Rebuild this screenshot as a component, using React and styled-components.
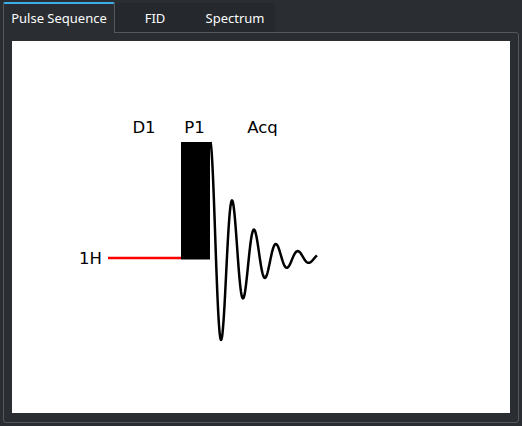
import React from "react";
import styled, { createGlobalStyle } from "styled-components";

const Global = createGlobalStyle`
  html, body { margin: 0; padding: 0; background: #2a2e32; }
  #root { height: 100vh; }
`;

const Window = styled.div`
  box-sizing: border-box;
  height: 100vh;
  padding: 2px 3px 3px 3px;
  display: flex;
  flex-direction: column;
  background: #2a2e32;
  font-family: "Noto Sans", sans-serif;
`;

const TabBar = styled.div`
  display: flex;
  align-items: flex-end;
  height: 30px;
  flex: none;
`;

const Tab = styled.div`
  box-sizing: border-box;
  display: flex;
  align-items: center;
  justify-content: center;
  font-size: 13px;
  color: #fcfcfc;
  white-space: nowrap;
  ${(p) =>
    p.$active
      ? `
    position: relative;
    z-index: 1;
    width: 112px;
    height: 31px;
    margin-bottom: -1px;
    padding-bottom: 1px;
    background: #2a2e32;
    border-top: 2px solid #3daee9;
    border-left: 1px solid #55595d;
    border-right: 1px solid #55595d;
    border-radius: 2px 2px 0 0;
  `
      : `
    width: 80px;
    height: 29px;
    background: #25282c;
  `}
`;

const Panel = styled.div`
  box-sizing: border-box;
  flex: 1;
  display: flex;
  padding: 8px 8px 9px 8px;
  border: 1px solid #55595d;
  border-radius: 0 3px 3px 3px;
  background: #2a2e32;
`;

const Canvas = styled.div`
  flex: 1;
  background: #ffffff;
  display: flex;
`;

const Plot = styled.svg`
  width: 100%;
  height: 100%;
  display: block;
`;

const Label = styled.text`
  font-family: "DejaVu Sans", sans-serif;
  font-size: 16.5px;
  fill: #000;
`;

function fidPath() {
  const x0 = 210.5;
  const pts = [];
  for (let x = x0; x <= 317; x += 0.5) {
    const t = x - x0;
    const y = 258 - 116 * Math.exp(-t / 31) * Math.cos((2 * Math.PI * t) / 21.9);
    pts.push(`${x.toFixed(2)},${y.toFixed(2)}`);
  }
  return "M" + pts.join(" L");
}

export default function App() {
  return (
    <>
      <Global />
      <Window>
        <TabBar>
          <Tab $active>Pulse Sequence</Tab>
          <Tab>FID</Tab>
          <Tab>Spectrum</Tab>
        </TabBar>
        <Panel>
          <Canvas>
            <Plot viewBox="12 41 498 372" preserveAspectRatio="none">
              <line x1="108" y1="258" x2="181" y2="258" stroke="#ff0000" strokeWidth="2.5" />
              <rect x="181" y="142" width="29" height="117.5" fill="#000" />
              <path d={fidPath()} fill="none" stroke="#000" strokeWidth="2.5" strokeLinejoin="round" />
              <Label x="144" y="132.7" textAnchor="middle">D1</Label>
              <Label x="194.5" y="132.7" textAnchor="middle">P1</Label>
              <Label x="262.5" y="132.7" textAnchor="middle">Acq</Label>
              <Label x="102" y="263.5" textAnchor="end">1H</Label>
            </Plot>
          </Canvas>
        </Panel>
      </Window>
    </>
  );
}
